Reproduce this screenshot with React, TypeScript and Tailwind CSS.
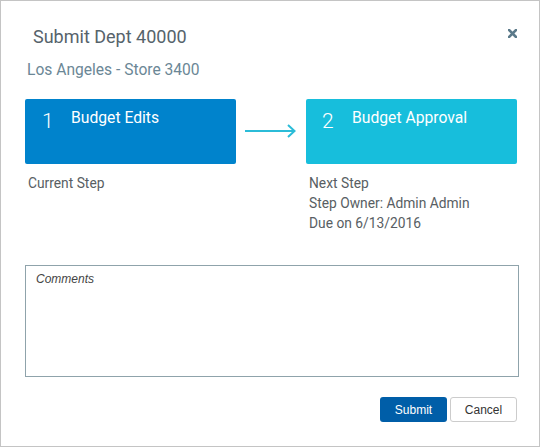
import React from 'react';

export default function App() {
  return (
    <div className="w-[540px] h-[447px] bg-white border border-[#c4c4c4] font-['Roboto',sans-serif] relative">
      <button className="absolute left-[507px] top-[28px] leading-none">
        <svg width="9" height="9" viewBox="0 0 9 9">
          <path d="M1 1 L8 8 M8 1 L1 8" stroke="#5b7a8a" strokeWidth="2.6" strokeLinecap="square" />
        </svg>
      </button>

      <div className="pt-[25px] pl-[32px]">
        <h1 className="text-[18px] leading-[22px] text-[#56636b]">Submit Dept 40000</h1>
      </div>
      <div className="pt-[13px] pl-[26px]">
        <p className="text-[15.6px] leading-[18px] text-[#6b8796]">Los Angeles - Store 3400</p>
      </div>

      {/* Steps */}
      <div className="flex pl-[24px] pt-[20px]">
        <div className="w-[211px]">
          <div className="h-[65px] bg-[#0083cc] rounded-[2px] flex items-start text-white">
            <span className="text-[21px] font-light leading-none pl-[17px] pt-[12px] w-[46px]">1</span>
            <span className="text-[15.7px] leading-none pt-[11px]">Budget Edits</span>
          </div>
          <div className="pt-[9px] pl-[3px] text-[13.8px] leading-[20px] text-[#585e63]">Current Step</div>
        </div>

        <div className="w-[70px] flex justify-center pt-[25px]">
          <svg width="52" height="14" viewBox="0 0 52 14" fill="none">
            <line x1="0" y1="7" x2="50" y2="7" stroke="#2bbcd8" strokeWidth="2" />
            <polyline points="43,1 49.5,7 43,13" stroke="#2bbcd8" strokeWidth="2" fill="none" />
          </svg>
        </div>

        <div className="w-[211px]">
          <div className="h-[65px] bg-[#17bedc] rounded-[2px] flex items-start text-white">
            <span className="text-[21px] font-light leading-none pl-[16px] pt-[12px] w-[46px]">2</span>
            <span className="text-[15.7px] leading-none pt-[11px]">Budget Approval</span>
          </div>
          <div className="pt-[9px] pl-[3px] text-[13.8px] leading-[20px] text-[#585e63]">
            <div>Next Step</div>
            <div>Step Owner: Admin Admin</div>
            <div>Due on 6/13/2016</div>
          </div>
        </div>
      </div>

      {/* Comments */}
      <div className="pl-[24px] pt-[32px]">
        <div className="w-[494px] h-[112px] border border-[#8fa3ab] px-[10px] pt-[4px] leading-none">
          <span className="italic text-[12px] leading-none text-[#444] font-['Liberation_Sans',sans-serif]">Comments</span>
        </div>
      </div>

      <div className="flex justify-end gap-[3px] pr-[22px] pt-[20px]">
        <button className="w-[67px] h-[25px] bg-[#005ea8] rounded-[3px] text-white text-[12px] font-['Liberation_Sans',sans-serif]">
          Submit
        </button>
        <button className="w-[67px] h-[25px] bg-white border border-[#cccccc] rounded-[3px] text-[#333] text-[12px] font-['Liberation_Sans',sans-serif]">
          Cancel
        </button>
      </div>
    </div>
  );
}
